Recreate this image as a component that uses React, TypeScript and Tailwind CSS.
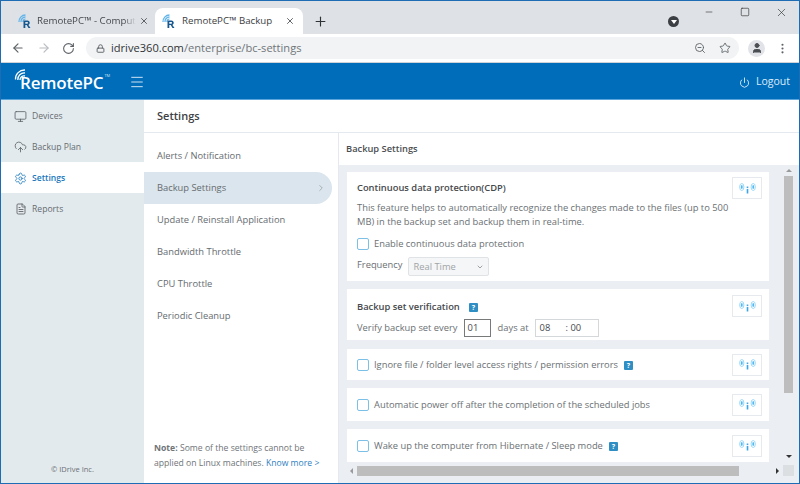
import React from "react";
import { Monitor, CloudUpload, Settings, FileText, Power, ChevronRight, ChevronDown, ArrowLeft, ArrowRight, RotateCw, Lock, ZoomOut, Star, Menu, X, Plus, Minus, Square, EllipsisVertical, User } from "lucide-react";

const Favicon = () => (
  <svg width="13" height="14" viewBox="0 0 13 14" fill="none" className="shrink-0">
    <path d="M1 8a6.500 6.500 0 0 1 6.500-7" stroke="#62b5ea" strokeWidth="1.300" />
    <path d="M3 8a4.500 4.500 0 0 1 4.500-5" stroke="#62b5ea" strokeWidth="1.300" />
    <path d="M5 8a2.500 2.500 0 0 1 2.500-3" stroke="#62b5ea" strokeWidth="1.200" />
    <path fillRule="evenodd" d="M5.500 14V6.500h4a2.300 2.300 0 0 1 .9 4.400L12.500 14h-2l-1.800-2.900H7.300V14zM7.300 8v1.700h1.900a.85.85 0 0 0 0-1.700z" fill="#17578f" />
  </svg>
);

const Signal = () => (
  <svg width="17" height="11" viewBox="0 0 17 11" fill="none">
    <ellipse cx="2.800" cy="4" rx="2.100" ry="3.500" stroke="#8fd4f7" strokeWidth="0.900" />
    <ellipse cx="2.800" cy="4" rx="0.900" ry="2" fill="#4db8f0" />
    <ellipse cx="14.200" cy="4" rx="2.100" ry="3.500" stroke="#8fd4f7" strokeWidth="0.900" />
    <ellipse cx="14.200" cy="4" rx="0.900" ry="2" fill="#4db8f0" />
    <rect x="7.700" y="3.500" width="1.600" height="1.600" fill="#3aa6e8" />
    <rect x="7.700" y="6" width="1.600" height="4.500" fill="#3aa6e8" />
  </svg>
);

const SigBtn = () => (
  <div className="flex h-[22px] w-[30px] shrink-0 items-center justify-center border border-[#e6eaee] bg-white">
    <Signal />
  </div>
);

const Check = () => <span className="h-[12px] w-[12px] shrink-0 rounded-[2px] border border-[#7cc0e8] bg-white" />;

const Help = () => (
  <span className="flex h-[9px] w-[9px] shrink-0 items-center justify-center rounded-[1px] bg-[#2f8fc4] text-[7px] leading-none font-bold text-white">?</span>
);

const Nav = ({ icon, label, active }: { icon: React.ReactNode; label: string; active?: boolean }) => (
  <div className={`flex h-[31px] items-center gap-[5px] pl-[13px] pt-[1px] text-[8.600px] ${active ? "bg-white font-semibold text-[#1a77bd]" : "text-[#666c70]"}`}>
    <span className="flex w-[13px] justify-center">{icon}</span>
    {label}
  </div>
);

const SubItem = ({ label, active }: { label: string; active?: boolean }) => (
  <div className={`flex h-[32px] items-center justify-between pl-[13px] text-[9.350px] text-[#666c70] ${active ? "mr-[6px] rounded-r-full bg-[#dbe5ed] pr-[6px]" : ""}`}>
    {label}
    {active && <ChevronRight size={10} color="#9aa3aa" />}
  </div>
);

const Row = ({ label, help, h, mb }: { label: string; help?: boolean; h: string; mb?: string }) => (
  <div className={`flex ${h} ${mb ?? ""} items-center bg-white pl-[10px] pr-[7px]`}>
    <span className="mt-[2px] flex items-center">
      <Check />
      <span className="ml-[5px] text-[9.350px] text-[#6b7074]">{label}</span>
      {help && <span className="ml-[6px]"><Help /></span>}
    </span>
    <span className="ml-auto"><SigBtn /></span>
  </div>
);

export default function App() {
  return (
    <div className="flex h-[484px] w-[800px] flex-col overflow-hidden border border-[#1e6cb3] bg-white [font-family:'Open_Sans',sans-serif]">
      {/* tab strip */}
      <div className="flex h-[33px] shrink-0 items-end bg-[#dee1e6] pl-[9px]">
        <div className="flex h-[26px] w-[145px] items-center pl-[8px] pr-[6px] text-[9.700px] text-[#45484c]">
          <Favicon />
          <span className="ml-[6px] whitespace-nowrap [mask-image:linear-gradient(to_right,black_88%,transparent)]">RemotePC™ - Comput</span>
          <X size={10} strokeWidth={2} color="#45484c" className="ml-auto" />
        </div>
        <div className="flex h-[26px] w-[148px] items-center rounded-t-[8px] bg-white pl-[7px] pr-[8px] text-[9.700px] text-[#3c4043]">
          <Favicon />
          <span className="ml-[7px] whitespace-nowrap">RemotePC™ Backup</span>
          <X size={10} strokeWidth={2} color="#45484c" className="ml-auto" />
        </div>
        <div className="ml-[10px] flex h-[26px] items-center">
          <Plus size={15} strokeWidth={1.800} color="#303336" />
        </div>
        <div className="ml-auto flex h-full items-start">
          <div className="mr-[12px] mt-[15px] flex h-[11px] w-[11px] items-center justify-center rounded-full bg-[#3c3f43]">
            <span className="mt-[1px] h-0 w-0 border-x-[3px] border-t-[4px] border-x-transparent border-t-white" />
          </div>
          <div className="flex w-[36px] justify-center pt-[6px]"><Minus size={10} strokeWidth={1.500} color="#333" /></div>
          <div className="flex w-[36px] justify-center pt-[6px]"><Square size={10} strokeWidth={1.600} color="#333" /></div>
          <div className="flex w-[36px] justify-center pt-[5px]"><X size={13} strokeWidth={1.200} color="#333" /></div>
        </div>
      </div>
      {/* toolbar */}
      <div className="flex h-[29px] shrink-0 items-center border-b border-[#cfd2d6] bg-white pl-[10px]">
        <ArrowLeft size={14} strokeWidth={2} color="#5f6368" />
        <ArrowRight size={14} strokeWidth={2} color="#b9bcc0" className="ml-[12px]" />
        <RotateCw size={13} strokeWidth={2} color="#5f6368" className="ml-[11px]" />
        <div className="ml-[11px] flex h-[22px] w-[653px] items-center rounded-full bg-[#f1f3f4] pl-[10px] pr-[8px]">
          <Lock size={9} strokeWidth={2.500} color="#5f6368" />
          <span className="ml-[6px] text-[11.100px] text-[#70757a]"><span className="text-[#303336]">idrive360.com</span>/enterprise/bc-settings</span>
          <ZoomOut size={12} strokeWidth={1.800} color="#5f6368" className="ml-auto" />
          <Star size={12} strokeWidth={1.800} color="#5f6368" className="ml-[13px]" />
        </div>
        <div className="ml-[9px] flex h-[17px] w-[17px] items-center justify-center rounded-full bg-[#e1e3e8]">
          <User size={12} fill="#4a4d52" color="#4a4d52" />
        </div>
        <EllipsisVertical size={13} strokeWidth={2} color="#5f6368" className="ml-[11px]" />
      </div>
      {/* app header */}
      <div className="flex h-[37px] shrink-0 items-center border-b border-[#5aa6dc] bg-[#006dbb] pl-[13px] pr-[9px] text-white">
        <div className="relative flex w-[115px] items-center pt-[2px]">
          <svg width="12" height="12" viewBox="0 0 12 12" fill="none" className="absolute -top-[2px] left-0">
            <path d="M1.500 10.500A9 9 0 0 1 11 1M3.800 11A6.500 6.500 0 0 1 11 4M6 11A4 4 0 0 1 11 7" stroke="white" strokeWidth="1.300" />
          </svg>
          <span className="ml-[6px] text-[17px] font-semibold leading-none tracking-[-0.2px]">RemotePC</span>
          <span className="mb-[12px] ml-[1px] text-[4px] text-[#cfe4f4]">TM</span>
        </div>
        <Menu size={16} strokeWidth={1.500} color="#cfe4f4" className="mt-[1px]" />
        <div className="ml-auto flex items-center gap-[6px] pt-[2px] text-[10.500px] text-[#dcebf6]">
          <Power size={11} strokeWidth={2} />
          Logout
        </div>
      </div>
      <div className="flex min-h-0 flex-1">
        {/* sidebar */}
        <div className="flex w-[143px] shrink-0 flex-col bg-[#e3eaee]">
          <Nav icon={<Monitor size={13} strokeWidth={1.500} color="#5a6064" />} label="Devices" />
          <Nav icon={<CloudUpload size={14} strokeWidth={1.500} color="#5a6064" />} label="Backup Plan" />
          <Nav icon={<Settings size={13} strokeWidth={1.500} color="#1a77bd" />} label="Settings" active />
          <Nav icon={<FileText size={12} strokeWidth={1.700} color="#5a6064" />} label="Reports" />
          <div className="mt-auto pb-[8px] text-center text-[7.500px] text-[#6b7074]">© IDrive Inc.</div>
        </div>
        <div className="flex min-w-0 flex-1 flex-col">
          <div className="flex h-[33px] shrink-0 items-center border-b border-[#e3e9ee] pl-[13px] text-[11px] font-semibold text-[#3d4144]">Settings</div>
          <div className="flex min-h-0 flex-1">
            {/* sub menu */}
            <div className="flex w-[195px] shrink-0 flex-col border-r border-[#e3e9ee] pt-[7px]">
              <SubItem label="Alerts / Notification" />
              <SubItem label="Backup Settings" active />
              <SubItem label="Update / Reinstall Application" />
              <SubItem label="Bandwidth Throttle" />
              <SubItem label="CPU Throttle" />
              <SubItem label="Periodic Cleanup" />
              <div className="mt-auto pb-[12px] pl-[10px] text-[8.650px] leading-[15px] text-[#6f7478]">
                <span className="font-bold">Note:</span> Some of the settings cannot be<br />applied on Linux machines. <span className="text-[#2f80c2]">Know more &gt;</span>
              </div>
            </div>
            {/* detail */}
            <div className="flex min-w-0 flex-1 flex-col">
              <div className="flex h-[32px] shrink-0 items-center pl-[7px] text-[9.300px] font-semibold text-[#4a4e51]">Backup Settings</div>
              <div className="flex min-h-0 flex-1 bg-[#ebeff3] pl-[8px]">
                <div className="flex w-[422px] shrink-0 flex-col">
                  <div className="mt-[7px] mb-[8px] h-[109px] bg-white pl-[10px] pr-[7px] pt-[5px] text-[9.350px]">
                    <div className="flex justify-between">
                      <span className="mt-[4px] font-semibold text-[#45494c]">Continuous data protection(CDP)</span>
                      <SigBtn />
                    </div>
                    <p className="mt-[2px] w-[385px] leading-[13.500px] text-[#6b7074]">This feature helps to automatically recognize the changes made to the files (up to 500 MB) in the backup set and backup them in real-time.</p>
                    <div className="mt-[9px] flex items-center">
                      <Check />
                      <span className="ml-[5px] text-[#6b7074]">Enable continuous data protection</span>
                    </div>
                    <div className="mt-[6px] flex items-center text-[#6b7074]">
                      <span className="-mt-[3px]">Frequency</span>
                      <div className="ml-[6px] flex h-[19px] w-[81px] items-center justify-between rounded-[2px] border border-[#e0e3e6] bg-[#f5f6f7] pl-[4px] pr-[4px] text-[#a0a4a8]">
                        Real Time
                        <ChevronDown size={8} color="#70757a" />
                      </div>
                    </div>
                  </div>
                  <div className="mb-[9px] flex h-[51px] justify-between bg-white pl-[10px] pr-[7px] pt-[6px] text-[9.350px]">
                    <div>
                      <div className="flex items-center pt-[5px] font-semibold text-[#45494c]">
                        Backup set verification
                        <span className="ml-[9px]"><Help /></span>
                      </div>
                      <div className="mt-[5px] flex items-center text-[#6b7074]">
                        Verify backup set every
                        <span className="ml-[6px] flex h-[18px] w-[27px] items-center border border-[#77797b] bg-white pl-[3px] text-[#45494c]">01</span>
                        <span className="ml-[7px]">days at</span>
                        <span className="ml-[6px] flex h-[18px] w-[64px] items-center border border-[#d5d8db] bg-white pl-[4px] text-[#45494c]"><span className="w-[26px]">08</span>: 00</span>
                      </div>
                    </div>
                    <SigBtn />
                  </div>
                  <Row label="Ignore file / folder level access rights / permission errors" help h="h-[31px]" mb="mb-[8px]" />
                  <Row label="Automatic power off after the completion of the scheduled jobs" h="h-[33px]" mb="mb-[8px]" />
                  <Row label="Wake up the computer from Hibernate / Sleep mode" help h="h-[33px]" />
                  {/* horizontal scrollbar */}
                  <div className="mt-[4px] flex h-[10px] shrink-0 items-center">
                    <span className="ml-[3px] mr-[4px] h-0 w-0 border-y-[3px] border-r-[3px] border-y-transparent border-r-[#9a9a9a]" />
                    <span className="h-full w-[382px] bg-[#bdbdbd]" />
                  </div>
                </div>
                <div className="flex min-h-0 flex-1 flex-col">
                  <div className="flex flex-1 pl-[14px]">
                    <div className="flex w-[11px] flex-col items-center">
                      <span className="mt-[4px] mb-[4px] h-0 w-0 border-x-[3px] border-b-[3px] border-x-transparent border-b-[#9a9a9a]" />
                      <span className="h-[217px] w-[9px] bg-[#bdbdbd]" />
                      <span className="mt-auto mb-[7px] h-0 w-0 border-x-[3px] border-t-[3px] border-x-transparent border-t-[#333]" />
                    </div>
                  </div>
                  <div className="mb-[7px] flex h-[11px] shrink-0 items-center">
                    <span className="ml-[7px] h-0 w-0 border-y-[3px] border-l-[3px] border-y-transparent border-l-[#333]" />
                    <span className="ml-[4px] h-full w-[11px] bg-[#dcdfe2]" />
                  </div>
                </div>
              </div>
            </div>
          </div>
        </div>
      </div>
    </div>
  );
}
